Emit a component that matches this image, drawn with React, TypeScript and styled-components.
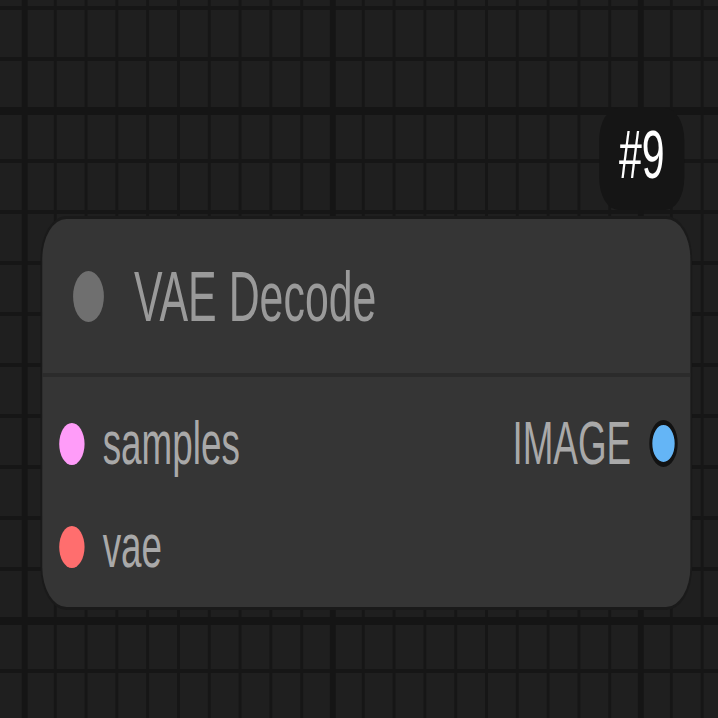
import React from "react";
import styled, { createGlobalStyle } from "styled-components";

// the screenshot is squeezed sideways, so the canvas is laid out at its
// natural width and squashed with scaleX
const SQUEEZE = 0.604;

const GlobalStyle = createGlobalStyle`
  html, body {
    margin: 0;
    padding: 0;
    background: #1f1f1f;
    overflow: hidden;
  }
`;

const Viewport = styled.div`
  width: 718px;
  height: 718px;
  overflow: hidden;
`;

const Canvas = styled.main`
  width: ${Math.ceil(718 / SQUEEZE)}px;
  height: 718px;
  box-sizing: border-box;
  padding: 108px 0 0 70px;
  transform: scaleX(${SQUEEZE});
  transform-origin: 0 0;

  background-color: #1f1f1f;
  background-image:
    linear-gradient(to right, #151515 0 10px, transparent 10px),
    linear-gradient(to bottom, #151515 0 8px, transparent 8px),
    linear-gradient(to right, #161616 0 5px, transparent 5px),
    linear-gradient(to bottom, #161616 0 4px, transparent 4px);
  background-size: 510px 100%, 100% 510px, 51px 100%, 100% 51px;
  background-position: 36px 0, 0 107px, 38px 0, 0 6px;

  font-family: "Liberation Sans", Arial, sans-serif;
`;

const NodeWrap = styled.div`
  display: flex;
  flex-direction: column;
  align-items: flex-end;
  width: 1073px;
`;

const Badge = styled.div`
  display: flex;
  align-items: center;
  justify-content: center;
  width: 141px;
  height: 102px;
  box-sizing: border-box;
  padding-bottom: 10px;
  margin: 0 10px 9px 0;
  border-radius: 32px;
  background: #151515;
  color: #ffffff;
  font-size: 68px;
  line-height: 1;
`;

const Node = styled.section`
  display: flex;
  flex-direction: column;
  width: 100%;
  height: 388px;
  border-radius: 40px;
  background: #353535;
  box-shadow: 0 0 0 3px #1a1a1a;
  overflow: hidden;
`;

const Header = styled.header`
  display: flex;
  align-items: center;
  gap: 50px;
  height: 154px;
  padding-left: 51px;
  border-bottom: 4px solid #2b2b2b;
`;

const Dot = styled.span<{ $color: string; $size: number; $ring?: boolean }>`
  flex: none;
  width: ${(p) => p.$size}px;
  height: ${(p) => p.$size}px;
  box-sizing: border-box;
  border-radius: 50%;
  background: ${(p) => p.$color};
  border: ${(p) => (p.$ring ? "5px solid #121212" : "none")};
`;

const Title = styled.h1`
  margin: 0;
  font-size: 71px;
  font-weight: 400;
  line-height: 1;
  color: #9a9a9a;
`;

const Body = styled.div`
  display: flex;
  flex-direction: column;
  padding-top: 15px;
`;

const Row = styled.div`
  display: flex;
  align-items: center;
  justify-content: space-between;
  height: 103px;
  padding: 0 21px 0 28px;
`;

const Slot = styled.div`
  display: flex;
  align-items: center;
  gap: 30px;
`;

const SlotLabel = styled.span`
  font-size: 61px;
  line-height: 1;
  color: #a9a9a9;
`;

export default function App() {
  return (
    <Viewport>
      <GlobalStyle />
      <Canvas>
        <NodeWrap>
          <Badge>#9</Badge>
          <Node>
            <Header>
              <Dot $color="#6f6f6f" $size={51} />
              <Title>VAE Decode</Title>
            </Header>
            <Body>
              <Row>
                <Slot>
                  <Dot $color="#ff9cf9" $size={42} />
                  <SlotLabel>samples</SlotLabel>
                </Slot>
                <Slot>
                  <SlotLabel>IMAGE</SlotLabel>
                  <Dot $color="#64b5f6" $size={47} $ring />
                </Slot>
              </Row>
              <Row>
                <Slot>
                  <Dot $color="#ff6e6e" $size={42} />
                  <SlotLabel>vae</SlotLabel>
                </Slot>
              </Row>
            </Body>
          </Node>
        </NodeWrap>
      </Canvas>
    </Viewport>
  );
}
